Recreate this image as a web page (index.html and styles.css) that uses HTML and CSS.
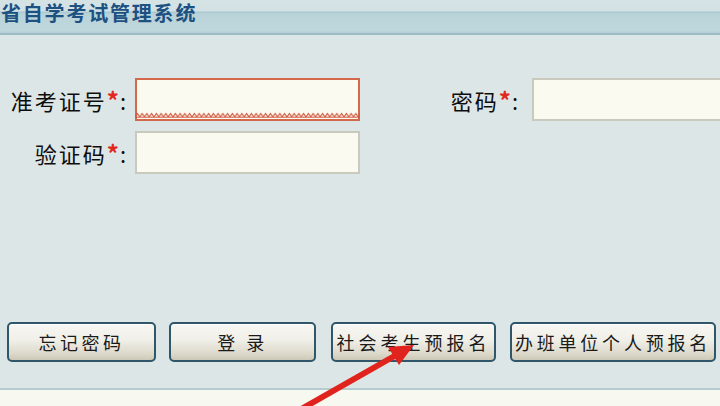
FILE: index.html
```html
<!DOCTYPE html>
<html lang="zh-CN">
<head>
<meta charset="utf-8">
<title>省自学考试管理系统</title>
<link rel="stylesheet" href="styles.css">
</head>
<body>
<div class="page">
  <header class="topbar">
    <h1 class="title">省自学考试管理系统</h1>
  </header>
  <main class="content">
    <div class="form">
      <div class="row">
        <label class="label">准考证号<span class="req">*</span>:</label>
        <div class="field field-error">
          <input class="input input-error" type="text">
          <svg class="squiggle" width="225" height="6" viewBox="0 0 225 6" aria-hidden="true">
            <defs>
              <pattern id="zz" width="4.75" height="6" patternUnits="userSpaceOnUse">
                <polyline points="0,5 2.37,1.5 4.75,5" fill="none" stroke="#d2553c" stroke-width="1.1"/>
              </pattern>
            </defs>
            <rect x="0" y="0" width="225" height="6" fill="url(#zz)"/>
            <line x1="0" y1="5.2" x2="225" y2="5.2" stroke="#d2553c" stroke-width="1"/>
          </svg>
        </div>
        <label class="label label-wide">密码<span class="req">*</span>:</label>
        <input class="input input-grow" type="password">
      </div>
      <div class="row">
        <label class="label">验证码<span class="req">*</span>:</label>
        <input class="input" type="text">
      </div>
    </div>
    <div class="buttons">
      <button class="btn btn-forgot">忘记密码</button>
      <button class="btn btn-login">登 录</button>
      <button class="btn btn-social">社会考生预报名</button>
      <button class="btn btn-unit">办班单位个人预报名</button>
    </div>
  </main>
  <footer class="bottom"></footer>
  <svg class="arrow" width="720" height="406" viewBox="0 0 720 406" aria-hidden="true">
    <line x1="303" y1="408" x2="398" y2="354" stroke="#e0231c" stroke-width="6" stroke-linecap="round"/>
    <polygon points="414,345 399,365 388,347" fill="#e0231c"/>
  </svg>
</div>
</body>
</html>
```
FILE: styles.css
```css
html, body {
  margin: 0;
  padding: 0;
}
body {
  width: 720px;
  height: 406px;
  overflow: hidden;
  background: #dde6e6;
  font-family: "Noto Sans CJK SC", "Noto Sans", sans-serif;
}
.page {
  position: relative;
  width: 720px;
  height: 406px;
  display: flex;
  flex-direction: column;
}
.topbar {
  height: 33px;
  background: linear-gradient(to bottom, #d5e3e5 0px, #d3e1e4 11px, #a9c6cd 12px, #b9d3d9 14px, #c0d8dd 30px, #b4cfd5 33px);
  border-bottom: 2px solid #9dbcc5;
  flex: none;
}
.title {
  margin: 0;
  padding: 0 0 0 1px;
  font-size: 20px;
  line-height: 26px;
  font-weight: bold;
  letter-spacing: 1.8px;
  color: #1c5182;
  white-space: nowrap;
}
.content {
  flex: 1;
  display: flex;
  flex-direction: column;
}
.form {
  padding-top: 43px;
  display: flex;
  flex-direction: column;
  gap: 10px;
}
.row {
  display: flex;
  align-items: center;
}
.label {
  width: 128px;
  margin-right: 7px;
  text-align: right;
  font-size: 22px;
  letter-spacing: 2px;
  color: #0d0d0d;
  white-space: nowrap;
  flex: none;
}
.label-wide {
  width: 160px;
  margin-right: 12px;
}
.req {
  color: #e0281e;
  font-size: 24px;
  font-weight: bold;
  letter-spacing: 1px;
}
.field {
  position: relative;
  flex: none;
}
.input {
  box-sizing: border-box;
  width: 225px;
  height: 43px;
  margin: 0;
  background: #fafaf0;
  border: 2px solid #c9c9bd;
  outline: none;
  flex: none;
}
.input-error {
  display: block;
  border-color: #d3684b;
}
.squiggle {
  position: absolute;
  left: 0;
  bottom: 3px;
  display: block;
}
.input-grow {
  width: 200px;
}
.buttons {
  margin-top: 148px;
  padding-left: 7px;
  display: flex;
  gap: 13px;
}
.btn {
  box-sizing: border-box;
  height: 40px;
  margin: 0;
  padding: 0;
  border: 2px solid #30566a;
  border-radius: 5px;
  background: linear-gradient(to bottom, #f7f7f2 0%, #f0efe8 45%, #dbd7c8 85%, #ccc7b6 100%);
  box-shadow: inset 0 1px 0 #ffffff;
  font-family: "Noto Sans CJK SC", sans-serif;
  font-size: 18px;
  letter-spacing: 3.5px;
  color: #1a1a1a;
  text-align: center;
  white-space: nowrap;
  flex: none;
}
.btn-forgot { width: 149px; }
.btn-login { width: 147px; }
.btn-social { width: 165px; margin-left: 2px; letter-spacing: 4px; }
.btn-unit { width: 206px; margin-left: 1px; letter-spacing: 3.8px; }
.bottom {
  height: 16px;
  flex: none;
  background: #f7f8ef;
  border-top: 2px solid #b6cbce;
}
.arrow {
  position: absolute;
  left: 0;
  top: 0;
  pointer-events: none;
}
```
